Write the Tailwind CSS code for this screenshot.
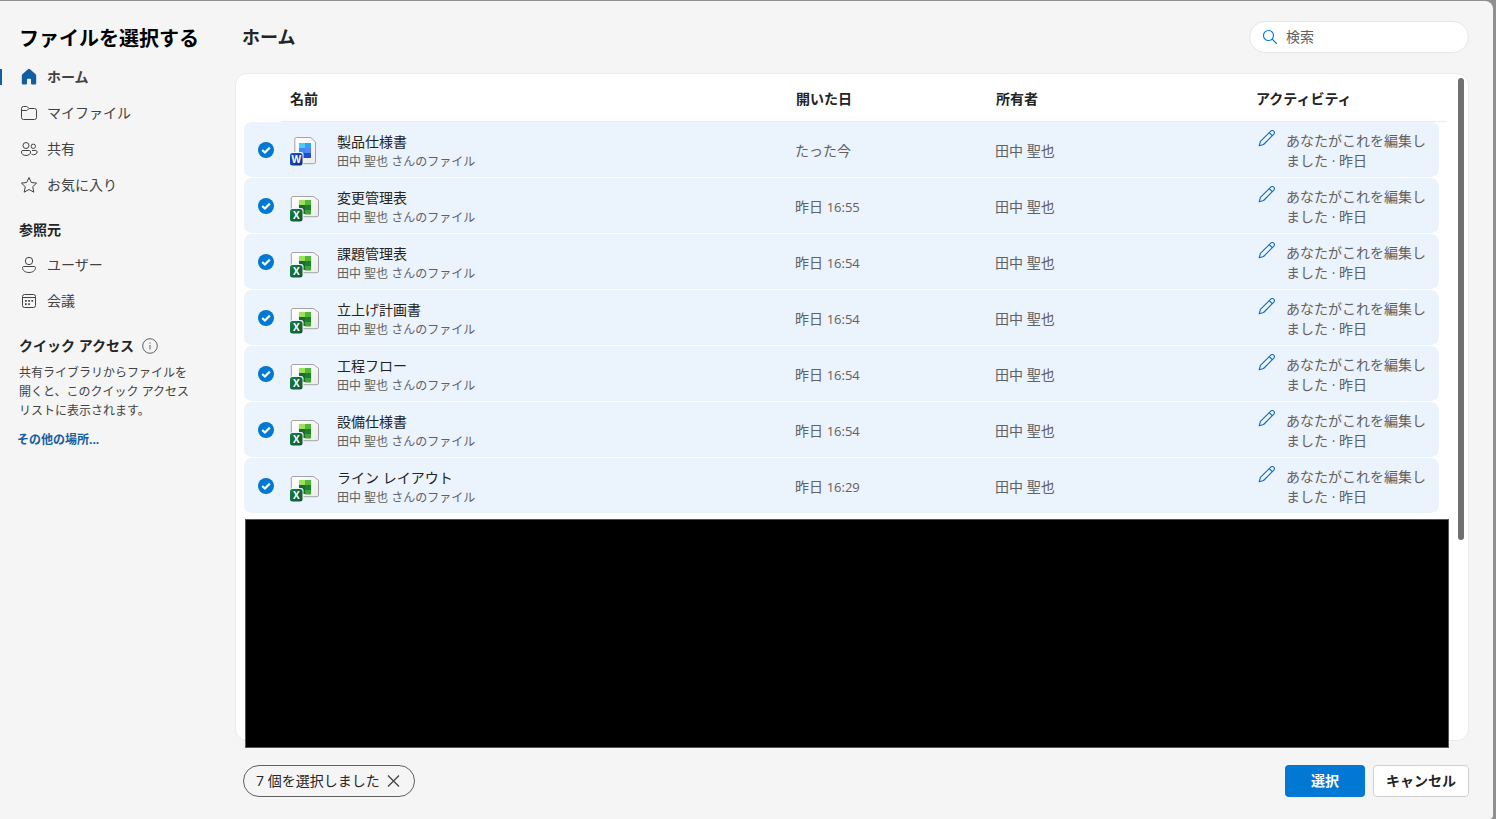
<!DOCTYPE html>
<html lang="ja" class="h-full">
  <head>
    <meta charset="UTF-8" />
    <meta name="viewport" content="width=device-width, initial-scale=1" />
    <title>ファイルを選択する</title>
    <script src="https://cdn.jsdelivr.net/npm/@tailwindcss/browser@4"></script>
  </head>

  <body
    class="h-full bg-[#8f8f8f] pt-px pr-[3px] font-['Open_Sans','Noto_Sans_CJK_JP',sans-serif] text-sm text-[#242424]"
  >
    <!-- Gradients shared by the file icons -->
    <svg class="absolute size-0" aria-hidden="true">
      <defs>
        <linearGradient id="paper" x1="0" y1="0" x2="1" y2="1">
          <stop offset="0" stop-color="#fff" />
          <stop offset="1" stop-color="#ececec" />
        </linearGradient>
        <linearGradient id="wordBadge" x1="0" y1="0" x2="1" y2="1">
          <stop offset="0" stop-color="#1d55c8" />
          <stop offset="1" stop-color="#0a2a8c" />
        </linearGradient>
        <linearGradient id="excelBadge" x1="0" y1="0" x2="1" y2="1">
          <stop offset="0" stop-color="#178048" />
          <stop offset="1" stop-color="#0b5534" />
        </linearGradient>
      </defs>
    </svg>

    <div class="flex h-full rounded-tr-lg rounded-br bg-[#f5f5f5]">
      <!-- Sidebar -->
      <aside class="w-[235px] shrink-0 pt-5">
        <h1 class="pl-[19px] text-xl leading-9 font-bold text-black">ファイルを選択する</h1>
        <nav class="pt-0.5 text-[#424242]">
          <a href="#" class="flex h-9 items-center gap-[9px] font-bold">
            <span class="h-4 w-0.5 bg-[#115ea3]"></span>
            <svg class="ml-[9px] size-4.5" viewBox="0 0 18 18" fill="#115ea3">
              <path d="M8 1.300a1.500 1.500 0 0 1 2 0l5.400 4.600c.5.400.8 1 .8 1.600v7.400c0 .9-.7 1.600-1.600 1.600h-2.100c-.9 0-1.500-.7-1.500-1.600v-3.400a.8.800 0 0 0-.8-.8H7.800a.8.800 0 0 0-.8.800v3.400c0 .9-.6 1.600-1.500 1.600H3.400c-.9 0-1.600-.7-1.600-1.600V7.500c0-.6.3-1.200.8-1.600z" />
            </svg>
            ホーム
          </a>
          <a href="#" class="flex h-9 items-center gap-[9px] pl-5">
            <svg class="size-4.5" viewBox="0 0 18 18" fill="none" stroke="currentColor" stroke-linejoin="round">
              <path d="M1.500 4.500a2 2 0 0 1 2-2h2.700a2 2 0 0 1 1.300.5L9 4.500h5.500a2 2 0 0 1 2 2v7a2 2 0 0 1-2 2h-11a2 2 0 0 1-2-2z" />
              <path d="M1.500 6.500h4.700a2 2 0 0 0 1.300-.5L9 4.500" />
            </svg>
            マイファイル
          </a>
          <a href="#" class="flex h-9 items-center gap-[9px] pl-5">
            <svg class="size-4.5" viewBox="0 0 18 18" fill="none" stroke="currentColor">
              <circle cx="6" cy="5.500" r="3" />
              <circle cx="13.300" cy="6.300" r="2.200" />
              <path d="M2.800 10.500h6.400c.8 0 1.400.6 1.400 1.400 0 2-1.800 3.600-4.600 3.600s-4.600-1.600-4.600-3.600c0-.8.600-1.400 1.400-1.400zM12 10.500h3.800c.7 0 1.300.6 1.300 1.300 0 1.700-1.400 2.900-3.600 2.900-.8 0-1.500-.2-2-.4" />
            </svg>
            共有
          </a>
          <a href="#" class="flex h-9 items-center gap-[9px] pl-5">
            <svg class="size-4.5" viewBox="0 0 18 18" fill="none" stroke="currentColor" stroke-linejoin="round">
              <path d="m9 1.500 2.300 5 5.300.6-3.900 3.600 1.100 5.500L9 13.500l-4.800 2.700 1.100-5.500-3.900-3.600 5.300-.6z" />
            </svg>
            お気に入り
          </a>
          <h2 class="pt-2.5 pl-[19px] leading-[34px] font-bold text-[#242424]">参照元</h2>
          <a href="#" class="flex h-9 items-center gap-[9px] pl-5">
            <svg class="size-4.5" viewBox="0 0 18 18" fill="none" stroke="currentColor">
              <circle cx="9" cy="5" r="3.700" />
              <path d="M3.700 10.500h10.600c.7 0 1.200.5 1.200 1.200 0 2.700-2.600 4.800-6.500 4.800s-6.500-2.100-6.500-4.800c0-.7.500-1.200 1.200-1.200z" />
            </svg>
            ユーザー
          </a>
          <a href="#" class="flex h-9 items-center gap-[9px] pl-5">
            <svg class="size-4.5" viewBox="0 0 18 18" fill="none" stroke="currentColor">
              <rect x="2.500" y="2.500" width="13" height="13" rx="2" />
              <path d="M2.500 5.500h13" />
              <path d="M5 8.800h1.700M8.200 8.800h1.700M11.400 8.800h1.700M5 12.200h1.700M8.200 12.200h1.700" stroke-width="1.700" />
            </svg>
            会議
          </a>
        </nav>
        <section class="pl-[19px]">
          <div class="flex items-center gap-2 pt-2.5">
            <h2 class="leading-[34px] font-bold">クイック アクセス</h2>
            <svg class="size-4" viewBox="0 0 16 16" fill="none" stroke="#616161">
              <circle cx="8" cy="8" r="7.300" />
              <path d="M8 7v4.500M8 4.500v1.200" />
            </svg>
          </div>
          <p class="w-44 text-xs leading-[19px] text-[#424242]">
            共有ライブラリからファイルを開くと、このクイック アクセス リストに表示されます。
          </p>
          <a href="#" class="mt-2.5 -ml-0.5 inline-block text-xs leading-5 font-bold text-[#115ea3]">その他の場所...</a>
        </section>
      </aside>

      <!-- Main -->
      <main class="flex min-w-0 flex-1 flex-col pr-6">
        <header class="flex h-[72px] items-center justify-between pl-[7px]">
          <h2 class="text-lg font-bold">ホーム</h2>
          <label class="flex h-8 w-[220px] items-center gap-2 rounded-full border border-[#e6e6e6] bg-white px-3 text-[#616161]">
            <svg class="size-4 shrink-0" viewBox="0 0 16 16" fill="none" stroke="#0078d4" stroke-width="1.100" stroke-linecap="round">
              <circle cx="6.500" cy="6.500" r="5" />
              <path d="m10.200 10.200 4.300 4.300" />
            </svg>
            <input type="search" placeholder="検索" aria-label="検索" class="min-w-0 flex-1 outline-none placeholder:text-[#616161]" />
          </label>
        </header>

        <div class="relative flex flex-1 flex-col rounded-xl border border-[#ebebeb] bg-white pr-[21px] pl-2">
          <table class="w-full table-fixed border-separate border-spacing-0 text-left">
            <colgroup>
              <col class="w-[37px]" />
              <col />
              <col class="w-[200px]" />
              <col class="w-[261px]" />
              <col class="w-[191px]" />
              <col class="w-2" />
            </colgroup>
            <thead>
              <tr class="h-12">
                <th></th>
                <th class="border-b border-[#ebebeb] pt-0.5 pl-[9px]">名前</th>
                <th class="border-b border-[#ebebeb] pt-0.5 pl-[9px]">開いた日</th>
                <th class="border-b border-[#ebebeb] pt-0.5 pl-[9px]">所有者</th>
                <th class="border-b border-[#ebebeb] pt-0.5 pl-2">アクティビティ</th>
                <th class="border-b border-[#ebebeb]"></th>
              </tr>
            </thead>
            <tbody id="files" class="text-[#616161]"></tbody>
          </table>
          <div class="mt-[5px] -mr-0.5 -mb-2 ml-px flex-1 border border-[#555] bg-black"></div>
          <div class="absolute top-1 right-1 h-[462px] w-1.5 rounded-full bg-[#707070]"></div>
        </div>

        <footer class="flex items-center justify-between pt-6 pb-[22px] pl-2">
          <button type="button" class="flex h-8 items-center gap-1.5 rounded-full border border-[#616161] px-3">
            7 個を選択しました
            <svg class="size-4" viewBox="0 0 16 16" fill="none" stroke="#424242" stroke-width="1.200">
              <path d="m2 2.500 11 11M13 2.500l-11 11" />
            </svg>
          </button>
          <div class="flex gap-2">
            <button type="button" class="h-8 w-20 rounded bg-[#0078d4] font-bold text-white">選択</button>
            <button type="button" class="h-8 w-24 rounded border border-[#d1d1d1] bg-white font-bold">キャンセル</button>
          </div>
        </footer>
      </main>
    </div>

    <script>
      const icons = {
        word: `
          <svg class="h-8 w-[30px]" viewBox="0 1 30 32">
            <path d="M6.500 2.500h14.300L25.500 7v20a1.700 1.700 0 0 1-1.700 1.700H6.500A1.700 1.700 0 0 1 4.800 27V4.200a1.700 1.700 0 0 1 1.700-1.700z" fill="url(#paper)" stroke="#a3a3a3" />
            <rect x="9" y="8" width="6" height="5" fill="#4ccbfa" />
            <rect x="15" y="8" width="6" height="5" fill="#2fa4f5" />
            <rect x="9" y="13" width="6" height="5" fill="#3a8df0" />
            <rect x="15" y="13" width="6" height="5" fill="#5b83f2" />
            <rect x="9" y="18" width="12" height="5" fill="#1c4fd0" />
            <rect x="0" y="17" width="13.500" height="14.500" rx="2.500" fill="#ebf3fc" />
            <rect x="0" y="18" width="12.500" height="12.500" rx="2.500" fill="url(#wordBadge)" />
            <text x="6.250" y="27.800" text-anchor="middle" font-size="10" font-weight="700" fill="#fff">W</text>
          </svg>`,
        excel: `
          <svg class="h-8 w-[30px]" viewBox="0 1 30 32">
            <path d="M3 5.500h20.500l5 3.800V24a1.700 1.700 0 0 1-1.700 1.700H3A1.700 1.700 0 0 1 1.300 24V7.200A1.700 1.700 0 0 1 3 5.500z" fill="url(#paper)" stroke="#a3a3a3" />
            <rect x="9" y="9" width="6" height="5" fill="#9be05a" />
            <rect x="15" y="9" width="6" height="5" fill="#4fb83a" />
            <rect x="9" y="14" width="6" height="9" fill="#1a6b2d" />
            <rect x="15" y="14" width="6" height="5" fill="#1d7d30" />
            <rect x="15" y="19" width="6" height="4.500" fill="#3fa535" />
            <rect x="0" y="17" width="13.500" height="14.500" rx="2.500" fill="#ebf3fc" />
            <rect x="0" y="18" width="12.500" height="12.500" rx="2.500" fill="url(#excelBadge)" />
            <text x="6.250" y="28" text-anchor="middle" font-size="10" font-weight="700" fill="#fff">X</text>
          </svg>`,
      };

      const files = [
        { name: "製品仕様書", icon: "word", day: "たった今", time: "" },
        { name: "変更管理表", icon: "excel", day: "昨日", time: "16:55" },
        { name: "課題管理表", icon: "excel", day: "昨日", time: "16:54" },
        { name: "立上げ計画書", icon: "excel", day: "昨日", time: "16:54" },
        { name: "工程フロー", icon: "excel", day: "昨日", time: "16:54" },
        { name: "設備仕様書", icon: "excel", day: "昨日", time: "16:54" },
        { name: "ライン レイアウト", icon: "excel", day: "昨日", time: "16:29" },
      ];

      document.getElementById("files").innerHTML = files
        .map(
          (file) => `
        <tr class="h-14">
          <td class="rounded-l-lg border-b border-white bg-[#ebf3fc] bg-clip-padding pl-3.5">
            <label class="grid size-4">
              <input type="checkbox" checked aria-label="${file.name}" class="col-start-1 row-start-1 size-4 appearance-none rounded-full bg-[#0078d4]" />
              <svg class="pointer-events-none col-start-1 row-start-1 size-4" viewBox="0 0 16 16">
                <path d="M4.200 8 6.900 10.500 11.800 5.600" fill="none" stroke="#fff" stroke-width="2.200" />
              </svg>
            </label>
          </td>
          <td class="border-b border-white bg-[#ebf3fc] pt-1 pl-[9px]">
            <div class="flex items-center gap-[17px]">
              ${icons[file.icon]}
              <div>
                <p class="leading-5 text-[#242424]">${file.name}</p>
                <p class="text-xs leading-5">田中 聖也 さんのファイル</p>
              </div>
            </div>
          </td>
          <td class="border-b border-white bg-[#ebf3fc] pt-0.5 pl-2">${file.day} <span class="text-[13px]">${file.time}</span></td>
          <td class="border-b border-white bg-[#ebf3fc] pt-0.5 pl-2">田中 聖也</td>
          <td class="rounded-r-lg border-b border-white bg-[#ebf3fc] bg-clip-padding pt-0.5 pr-2.5 pl-2.5">
            <div class="flex gap-2.5">
              <svg class="-mt-0.5 size-4.5 shrink-0" viewBox="0 0 18 18" fill="none" stroke="#0f6cbd" stroke-width="1.100" stroke-linejoin="round">
                <path d="M1.200 16.800 2.400 12.400 12.700 2.100a2.150 2.150 0 0 1 3.100 0 2.150 2.150 0 0 1 0 3.100L5.600 15.500z" />
                <path d="m11.200 3.600 3.100 3.100" />
              </svg>
              <p class="leading-5">あなたがこれを編集しました · 昨日</p>
            </div>
          </td>
          <td></td>
        </tr>`
        )
        .join("");
    </script>
  </body>
</html>
